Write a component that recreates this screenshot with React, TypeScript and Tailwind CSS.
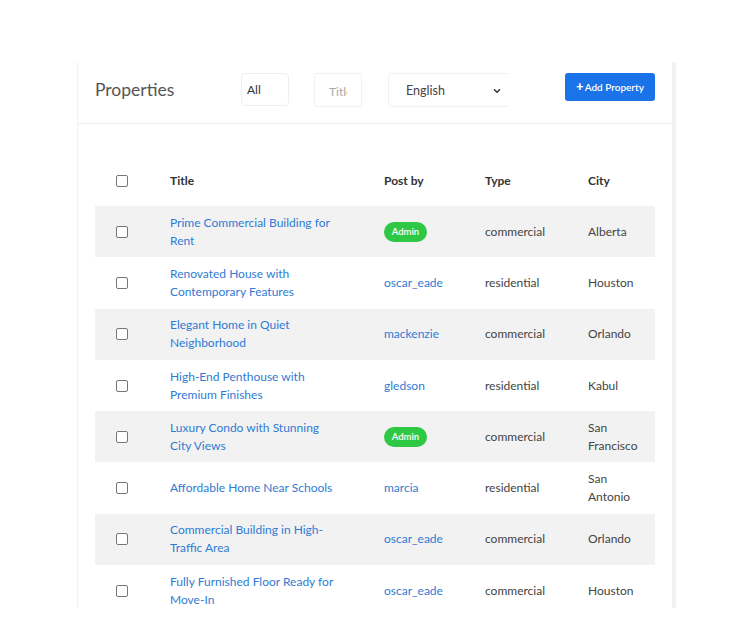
import { ChevronDown } from "lucide-react";

type Row = {
    title: string;
    postBy: string;
    admin?: boolean;
    type: string;
    city: string;
};

const rows: Row[] = [
    { title: "Prime Commercial Building for Rent", postBy: "Admin", admin: true, type: "commercial", city: "Alberta" },
    { title: "Renovated House with Contemporary Features", postBy: "oscar_eade", type: "residential", city: "Houston" },
    { title: "Elegant Home in Quiet Neighborhood", postBy: "mackenzie", type: "commercial", city: "Orlando" },
    { title: "High-End Penthouse with Premium Finishes", postBy: "gledson", type: "residential", city: "Kabul" },
    { title: "Luxury Condo with Stunning City Views", postBy: "Admin", admin: true, type: "commercial", city: "San Francisco" },
    { title: "Affordable Home Near Schools", postBy: "marcia", type: "residential", city: "San Antonio" },
    { title: "Commercial Building in High-Traffic Area", postBy: "oscar_eade", type: "commercial", city: "Orlando" },
    { title: "Fully Furnished Floor Ready for Move-In", postBy: "oscar_eade", type: "commercial", city: "Houston" },
];

const Checkbox = () => (
    <input
        type="checkbox"
        className="appearance-none w-[12px] h-[12px] border border-[#767676] rounded-[2px] bg-white block"
    />
);

const App = () => {
    return (
        <div
            className="min-h-screen w-full bg-white pt-[62px] pl-[77px]"
            style={{ fontFamily: "Lato, 'Open Sans', sans-serif" }}
        >
            <div className="w-[599px] h-[546px] overflow-hidden bg-white border-l border-[#f1f1f1] border-r-4 border-r-[#f1f2f3]">
                {/* Header */}
                <div className="h-[62px] border-b border-[#ececec] flex items-start pt-[11px] pl-[17px]">
                    <h1 className="w-[146px] text-[17.5px] leading-[33px] text-[#555]">Properties</h1>
                    <div className="w-[48px] h-[33px] border border-[#efefef] rounded-[4px] flex items-center pl-[5px] text-[12px] text-[#333]">
                        All
                    </div>
                    <input
                        placeholder="Title"
                        className="ml-[25px] w-[48px] h-[34px] border border-[#f1f1f1] rounded-[3px] pl-[14px] pr-[14px] pt-[2px] text-[12px] placeholder:text-[#aaa] outline-none"
                    />
                    <div className="ml-[26px] w-[120px] h-[34px] border border-[#f1f1f1] border-r-0 rounded-l-[4px] flex items-center justify-between pl-[17px] pr-[6px] pt-[2px] text-[12.5px] text-[#444]">
                        <span>English</span>
                        <ChevronDown size={10} strokeWidth={3.5} className="text-[#333]" />
                    </div>
                    <button className="ml-[57px] w-[90px] h-[28px] bg-[#1a73e8] rounded-[3px] text-white text-[10px] font-semibold flex items-center justify-center gap-[1px]">
                        <span className="text-[13px] font-black leading-none -mt-[1px]">+</span>
                        <span>Add Property</span>
                    </button>
                </div>

                {/* Table */}
                <div className="pt-[31px] pl-[17px]">
                    <table className="table-fixed w-[560px] border-collapse">
                        <colgroup>
                            <col className="w-[60px]" />
                            <col className="w-[214px]" />
                            <col className="w-[101px]" />
                            <col className="w-[103px]" />
                            <col className="w-[82px]" />
                        </colgroup>
                        <thead>
                            <tr className="h-[51px] text-left text-[12px] font-bold text-[#333]">
                                <th className="pl-[21px]"><Checkbox /></th>
                                <th className="px-[15px]">Title</th>
                                <th className="px-[15px]">Post by</th>
                                <th className="px-[15px]">Type</th>
                                <th className="px-[15px]">City</th>
                            </tr>
                        </thead>
                        <tbody>
                            {rows.map((row, index) => (
                                <tr
                                    key={index}
                                    className={`h-[51.3px] text-[12px] leading-[18px] ${index % 2 === 0 ? "bg-[#f2f2f2]" : "bg-white"}`}
                                >
                                    <td className="pl-[21px]"><Checkbox /></td>
                                    <td className="pl-[15px] pr-[30px] text-[#2f7bd3]">{row.title}</td>
                                    <td className="px-[15px]">
                                        {row.admin ? (
                                            <span className="inline-flex items-center justify-center w-[43px] h-[20px] rounded-full bg-[#2fc845] text-white text-[9.5px] font-semibold">
                                                Admin
                                            </span>
                                        ) : (
                                            <span className="text-[#2f7bd3]">{row.postBy}</span>
                                        )}
                                    </td>
                                    <td className="px-[15px] text-[#444]">{row.type}</td>
                                    <td className="px-[15px] text-[#444]">{row.city}</td>
                                </tr>
                            ))}
                        </tbody>
                    </table>
                </div>
            </div>
        </div>
    );
};

export default App;
